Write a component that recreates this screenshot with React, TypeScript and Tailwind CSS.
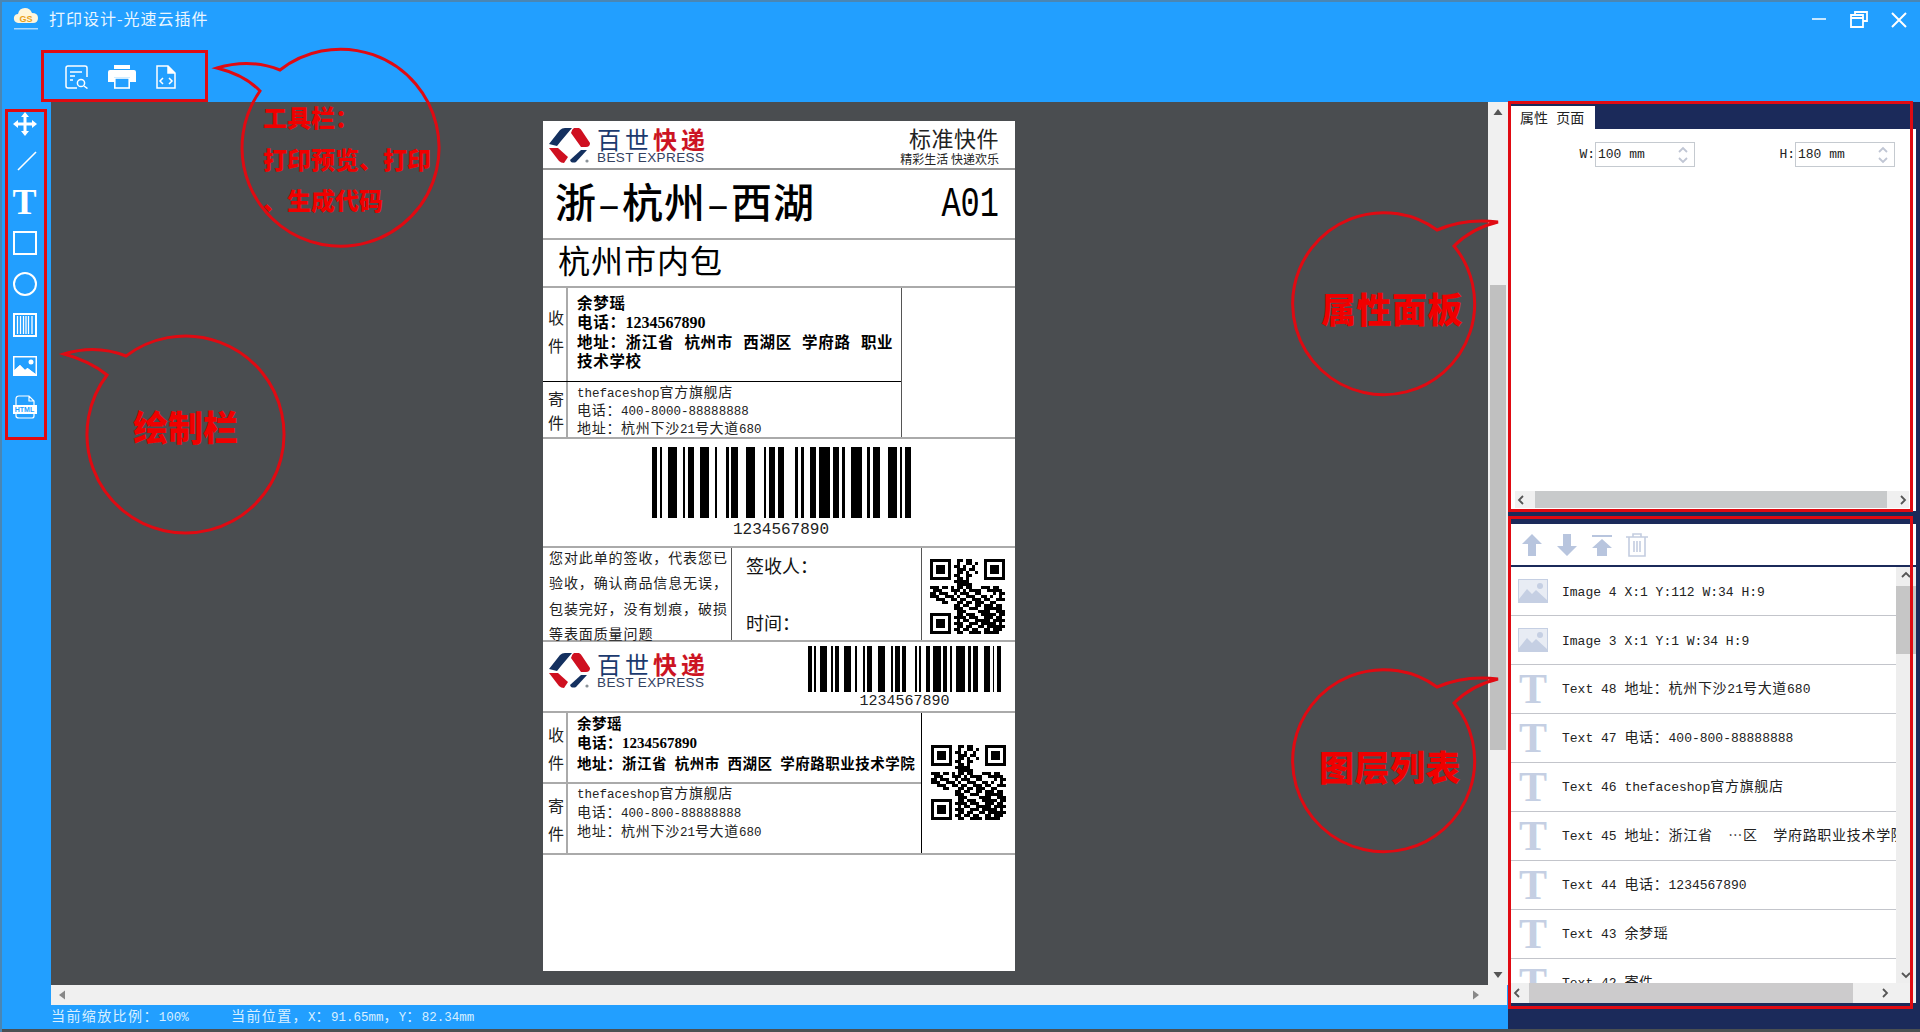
import React from 'react'

const mono = "font-['Liberation_Mono','Noto_Sans_CJK_SC',monospace]"
const cjk = "font-['Noto_Sans_CJK_SC','Liberation_Sans',sans-serif]"

// bars read off the big barcode, in 3x zoom units
const bars = [
  [366, 382], [390, 397], [415, 441], [459, 466], [474, 492], [511, 537], [555, 562], [588, 596], [604, 623],
  [649, 675], [701, 708], [716, 734], [743, 762], [795, 804], [812, 822], [840, 858], [867, 900], [908, 926],
  [936, 943], [961, 996], [1011, 1020], [1029, 1048], [1073, 1099], [1108, 1115], [1124, 1141],
]

const qr = [
  '1111111001101100001111111',
  '1000001001001101001000001',
  '1011101011010010001011101',
  '1011101001110110001011101',
  '1011101001101001001011101',
  '1000001011001100001000001',
  '1111111001101000001111111',
  '0000000011111000000000000',
  '0000000001111100000000000',
  '1110110101101100011101100',
  '0111000111010111100111110',
  '1101110010111001100001011',
  '1110011101001110011010010',
  '0011100110110011101100111',
  '0000110001101101110011000',
  '0000000011011001101110110',
  '0000000011100111001111110',
  '0000000001110000111100111',
  '1111111001101110011111011',
  '1000001011110111001110110',
  '1011101001011001111101111',
  '1011101011100111011111010',
  '1011101001101100110111111',
  '1000001011011011001101110',
  '1111111001100111101111100',
]

const layers = [
  { kind: 'image', label: 'Image 4 X:1 Y:112 W:34 H:9' },
  { kind: 'image', label: 'Image 3 X:1 Y:1 W:34 H:9' },
  { kind: 'text', label: 'Text 48 地址\uff1a杭州下沙21号大道680' },
  { kind: 'text', label: 'Text 47 电话\uff1a400-800-88888888' },
  { kind: 'text', label: 'Text 46 thefaceshop官方旗舰店' },
  { kind: 'text', label: 'Text 45 地址\uff1a浙江省\u00a0 ⋯区\u00a0 学府路职业技术学院' },
  { kind: 'text', label: 'Text 44 电话\uff1a1234567890' },
  { kind: 'text', label: 'Text 43 余梦瑶' },
  { kind: 'text', label: 'Text 42 寄件' },
]

function Mixed({ text, wide = 'text-[14px] tracking-[0.7px]' }: { text: string; wide?: string }) {
  return (
    <>
      {text.split(/([\u3000-\u303f\u4e00-\u9fff\uff00-\uffef⋯]+)/).map((part, i) =>
        i % 2 ? <span key={i} className={wide}>{part}</span> : part
      )}
    </>
  )
}

function Barcode({ className }: { className: string }) {
  return (
    <svg viewBox="366 0 776 10" preserveAspectRatio="none" shapeRendering="crispEdges" className={className}>
      {bars.map(([a, b]) => <rect key={a} x={a} y={0} width={b - a} height={10} fill="#000" />)}
    </svg>
  )
}

function Qr() {
  return (
    <svg viewBox="0 0 25 25" shapeRendering="crispEdges" className="w-[75px] h-[75px]">
      {qr.map((row, y) => row.split('').map((c, x) => c === '1' ? <rect key={x + '-' + y} x={x} y={y} width={1} height={1} fill="#000" /> : null))}
    </svg>
  )
}

function BestLogo({ className }: { className: string }) {
  return (
    <div className={'flex items-start gap-[6px] ' + className}>
      <svg viewBox="0 0 42 36" className="w-[42px] h-[36px] shrink-0">
        <path d="M0 16 L11 2 Q13 0 16 0 L23 0 L12 13 L8 18 Z" fill="#14305f" />
        <path d="M25 0 L30 0 Q32 1 33 3 L41 15 Q41 19 37 19 L32 19 L22 5 Q23 1 25 0 Z" fill="#cf1020" />
        <path d="M0 20 L9 20 L19 29 L15 35 Q12 35 10 33 Z" fill="#cf1020" />
        <path d="M32 22 L38 22 L27 34 Q25 35 22 34 L21 32 Z" fill="#14305f" />
        <circle cx="38" cy="33" r="1.6" fill="#8a9298" />
      </svg>
      <div className="flex flex-col -mt-[1px]">
        <div className={"text-[24px] leading-[23px] tracking-[4px] whitespace-nowrap " + cjk}>
          <span className="text-[#1c3a6e]">百世</span><span className="text-[#cc1423] font-bold">快递</span>
        </div>
        <div className="font-['Liberation_Sans',sans-serif] mt-[1px] text-[13.5px] leading-[14px] tracking-[0.4px] text-[#33415f] whitespace-nowrap">BEST EXPRESS</div>
      </div>
    </div>
  )
}

function ImageIcon({ color, back }: { color: string; back: string }) {
  return (
    <svg viewBox="0 0 30 24" className="w-[30px] h-[24px] shrink-0">
      <rect x="0.5" y="0.5" width="29" height="23" fill={back} stroke={color} />
      <path d="M1 23 L1 20 L9 10 L14 15 L18 11 L29 21 L29 23 Z" fill={color} />
      <circle cx="22" cy="7" r="3" fill={color} />
    </svg>
  )
}

function Chevron({ dir, className }: { dir: 'up' | 'down' | 'left' | 'right'; className: string }) {
  const d = { up: 'M2 8 L6 4 L10 8', down: 'M2 4 L6 8 L10 4', left: 'M8 2 L4 6 L8 10', right: 'M4 2 L8 6 L4 10' }[dir]
  return (
    <svg viewBox="0 0 12 12" className={'w-[12px] h-[12px] ' + className}>
      <path d={d} fill="none" stroke="currentColor" strokeWidth="1.8" />
    </svg>
  )
}

function Spinner({ label, value }: { label: string; value: string }) {
  return (
    <div className={"flex items-center text-[13px] text-[#222] " + mono}>
      <span className="w-[18px] text-right">{label}</span>
      <div className="w-[100px] h-[25px] border border-[#c5cad0] flex items-center justify-between pl-[2px] pr-[5px]">
        <span>{value}</span>
        <div className="flex flex-col text-[#c0c6d4]">
          <Chevron dir="up" className="-mb-[2px]" />
          <Chevron dir="down" />
        </div>
      </div>
    </div>
  )
}

function Side({ a, b, gap }: { a: string; b: string; gap: string }) {
  return (
    <div className={"w-[25px] shrink-0 border-r-2 border-[#aaa] pl-[3px] flex flex-col items-center justify-center text-[16px] text-[#222] " + cjk}>
      <span className={gap}>{a}</span>
      <span>{b}</span>
    </div>
  )
}

function Paper() {
  return (
    <div className="w-[472px] h-[850px] bg-white flex flex-col text-black">
      <div className="h-[49px] shrink-0 border-b-2 border-[#999] flex justify-between pr-[16px] pt-[7px]">
        <BestLogo className="pl-[6px]" />
        <div className={"flex flex-col items-end -mt-[5px] " + cjk}>
          <span className="text-[22px] leading-[29px] tracking-[0.5px] text-[#222]">标准快件</span>
          <span className="text-[12px] leading-[14px] text-[#222] whitespace-nowrap">精彩生活 快递欢乐</span>
        </div>
      </div>
      <div className="h-[70px] shrink-0 border-b-2 border-[#aaa] flex items-center justify-between pl-[12px] pr-[16px]">
        <span className={"text-[41px] font-medium tracking-[1px] leading-none whitespace-nowrap " + cjk}>
          浙<span className="font-['Liberation_Mono',monospace] text-[40px]">–</span>杭州<span className="font-['Liberation_Mono',monospace] text-[40px]">–</span>西湖
        </span>
        <span className="font-['Liberation_Mono',monospace] text-[32px] scale-y-[1.3] leading-none mt-[4px]">A01</span>
      </div>
      <div className="h-[48px] shrink-0 border-b-2 border-[#aaa] flex items-center pl-[15px] pb-[9px]">
        <span className={"text-[32px] tracking-[1px] leading-none whitespace-nowrap " + cjk}>杭州市内包</span>
      </div>
      <div className="h-[151px] shrink-0 border-b-2 border-[#aaa] flex">
        <div className="w-[359px] border-r border-[#555] flex flex-col">
          <div className="h-[94px] shrink-0 border-b border-black flex">
            <Side a="收" b="件" gap="mb-[4px] -mt-[8px]" />
            <div className={"pl-[9px] pt-[5px] text-[15.5px] leading-[19px] font-bold tracking-[0.7px] [word-spacing:6px] whitespace-nowrap " + cjk}>
              <div>余梦瑶</div>
              <div>{'电话\uff1a'}<span className="font-['Liberation_Serif',serif] text-[16px] tracking-[0px]">1234567890</span></div>
              <div>{'地址\uff1a浙江省 杭州市 西湖区 学府路 职业'}</div>
              <div>技术学校</div>
            </div>
          </div>
          <div className="flex-1 min-h-0 flex">
            <Side a="寄" b="件" gap="" />
            <div className={"pl-[9px] pt-[2px] text-[12.5px] leading-[18px] text-[#222] whitespace-nowrap " + mono}>
              <div className="h-[18px]"><Mixed text="thefaceshop官方旗舰店" /></div>
              <div className="h-[18px]"><Mixed text={'电话\uff1a400-8000-88888888'} /></div>
              <div className="h-[18px]"><Mixed text={'地址\uff1a杭州下沙21号大道680'} /></div>
            </div>
          </div>
        </div>
      </div>
      <div className="h-[109px] shrink-0 border-b-2 border-[#aaa] flex flex-col items-center pt-[8px] pl-[4px]">
        <Barcode className="w-[259px] h-[71px] shrink-0" />
        <span className="font-['Liberation_Mono',monospace] text-[16px] leading-[20px] mt-[2px] text-[#222]">1234567890</span>
      </div>
      <div className="h-[94px] shrink-0 border-b-2 border-[#aaa] flex">
        <div className={"w-[189px] shrink-0 border-r border-[#555] pl-[6px] text-[14px] leading-[25.3px] tracking-[0.9px] text-[#222] whitespace-nowrap " + cjk}>
          <div className="-mt-[3px]">{'您对此单的签收\uff0c代表您已'}</div>
          <div>{'验收\uff0c确认商品信息无误\uff0c'}</div>
          <div>{'包装完好\uff0c没有划痕\uff0c破损'}</div>
          <div>等表面质量问题</div>
        </div>
        <div className={"w-[190px] shrink-0 border-r border-[#555] pl-[14px] pt-[4px] text-[18px] leading-[26px] text-[#111] " + cjk}>
          <div>{'签收人\uff1a'}</div>
          <div className="mt-[31px]">{'时间\uff1a'}</div>
        </div>
        <div className="flex-1 pl-[8px] pt-[11px]"><Qr /></div>
      </div>
      <div className="h-[71px] shrink-0 border-b-2 border-[#aaa] flex justify-between pl-[6px] pr-[14px]">
        <BestLogo className="pt-[11px]" />
        <div className="flex flex-col items-center pt-[4px]">
          <Barcode className="w-[193px] h-[46px] shrink-0" />
          <span className="font-['Liberation_Mono',monospace] text-[15px] leading-[18px] mt-[1px] text-[#222]">1234567890</span>
        </div>
      </div>
      <div className="h-[142px] shrink-0 border-b-2 border-[#aaa] flex">
        <div className="w-[379px] border-r border-black flex flex-col">
          <div className="h-[71px] shrink-0 border-b-2 border-[#aaa] flex">
            <Side a="收" b="件" gap="mb-[4px]" />
            <div className={"pl-[9px] text-[14.5px] leading-[19px] font-bold tracking-[0.5px] [word-spacing:4px] whitespace-nowrap " + cjk}>
              <div>余梦瑶</div>
              <div>{'电话\uff1a'}<span className="font-['Liberation_Serif',serif] text-[15px] tracking-[0px]">1234567890</span></div>
              <div>{'地址\uff1a浙江省 杭州市 西湖区 学府路职业技术学院'}</div>
            </div>
          </div>
          <div className="flex-1 min-h-0 flex">
            <Side a="寄" b="件" gap="mb-[4px]" />
            <div className={"pl-[9px] pt-[1px] text-[12.5px] leading-[19px] text-[#222] whitespace-nowrap " + mono}>
              <div className="h-[19px]"><Mixed text="thefaceshop官方旗舰店" /></div>
              <div className="h-[19px]"><Mixed text={'电话\uff1a400-800-88888888'} /></div>
              <div className="h-[19px]"><Mixed text={'地址\uff1a杭州下沙21号大道680'} /></div>
            </div>
          </div>
        </div>
        <div className="flex-1 pl-[9px] pt-[32px]"><Qr /></div>
      </div>
    </div>
  )
}

function RightPanel() {
  return (
    <div className="w-[412px] h-full bg-[#1b2a5a] flex flex-col pr-[4px]">
      <div className="h-[27px] pt-[4px] pl-[3px] flex">
        <div className={"w-[84px] h-[23px] bg-white pl-[9px] text-[14px] leading-[23px] [word-spacing:5px] text-[#222] " + cjk}>属性 页面</div>
      </div>
      <div className="h-[382px] bg-white flex flex-col justify-between pb-[3px]">
        <div className="flex pt-[13px] pl-[69px] gap-[82px]">
          <Spinner label="W:" value="100 mm" />
          <Spinner label="H:" value="180 mm" />
        </div>
        <div className="h-[17px] mx-[7px] bg-[#f0f0f0] flex items-center justify-between text-[#555]">
          <Chevron dir="left" className="" />
          <div className="h-full flex-1 ml-[8px] mr-[10px] bg-[#c8cacb]" />
          <Chevron dir="right" className="" />
        </div>
      </div>
      <div className="h-[13px]" />
      <div className="h-[43px] bg-white border-b-2 border-[#1b2a5a] flex items-center gap-[13px] pl-[13px]">
        <svg viewBox="0 0 22 22" className="w-[22px] h-[22px]"><path d="M11 0 L21 10 L15 10 L15 22 L7 22 L7 10 L1 10 Z" fill="#b8c5de" /></svg>
        <svg viewBox="0 0 22 22" className="w-[22px] h-[22px]"><path d="M7 0 L15 0 L15 12 L21 12 L11 22 L1 12 L7 12 Z" fill="#b8c5de" /></svg>
        <svg viewBox="0 0 22 22" className="w-[22px] h-[22px]"><path d="M1 1 H21 V3 H1 Z M11 5 L21 14 L16 14 L16 22 L6 22 L6 14 L1 14 Z" fill="#b8c5de" /></svg>
        <svg viewBox="0 0 22 24" className="w-[22px] h-[24px]" fill="none" stroke="#c4cde0" strokeWidth="1.6"><path d="M0 4 H22 M7 4 V1 H15 V4 M3 4 V23 H19 V4 M8 8 V19 M11 8 V19 M14 8 V19" /></svg>
      </div>
      <div className="h-[416px] bg-white flex overflow-hidden">
        <div className="flex-1 min-w-0 flex flex-col">
          {layers.map((layer) => (
            <div key={layer.label} className="h-[49px] shrink-0 border-b border-[#c3c5cb] flex items-center pl-[10px] gap-[14px] overflow-hidden">
              {layer.kind === 'image'
                ? <ImageIcon color="#c5cfe3" back="#e8ecf4" />
                : <span className="w-[30px] text-center font-['Liberation_Serif',serif] font-bold text-[42px] leading-none text-[#c5cfe3] shrink-0">T</span>}
              <span className={"text-[13px] text-[#222] whitespace-nowrap " + mono + (layer.kind === 'image' ? ' pt-[3px]' : '')}><Mixed text={layer.label} /></span>
            </div>
          ))}
        </div>
        <div className="w-[20px] shrink-0 bg-[#eeeeee] flex flex-col items-center text-[#555]">
          <Chevron dir="up" className="mt-[2px] mb-[5px]" />
          <div className="w-full h-[68px] bg-[#c6c6c6]" />
          <Chevron dir="down" className="mt-auto mb-[2px]" />
        </div>
      </div>
      <div className="h-[20px] bg-[#f0f0f0] flex items-center pl-[3px] text-[#555]">
        <Chevron dir="left" className="" />
        <div className="h-full w-[324px] ml-[6px] bg-[#cccbcc]" />
        <Chevron dir="right" className="ml-[26px]" />
      </div>
    </div>
  )
}

function Annotations() {
  const red = '#e00a12'
  return (
    <>
      <div className="absolute left-[41px] top-[50px] w-[167px] h-[52px] border-[3px] border-[#e00a12]" />
      <div className="absolute left-[5px] top-[109px] w-[42px] h-[331px] border-[3px] border-[#e00a12]" />
      <div className="absolute left-[1508px] top-[101px] w-[405px] h-[411px] border-[3px] border-[#e00a12]" />
      <div className="absolute left-[1508px] top-[516px] w-[405px] h-[493px] border-[3px] border-[#e00a12]" />
      <svg className="absolute left-0 top-0 w-[1920px] h-[1032px] pointer-events-none" viewBox="0 0 1920 1032" fill="none" stroke={red} strokeWidth="3">
        <path d="M280 70 Q250 58 217 68 Q245 75 260 91 A98.5 98.5 0 1 0 280 70 Z" />
        <path d="M126 356 Q96 344 64 354 Q90 361 107 375 A98.5 98.5 0 1 0 126 356 Z" />
        <path d="M1437 230 Q1465 218 1498 222 Q1472 228 1454 246 A91 91 0 1 1 1437 230 Z" />
        <path d="M1437 687 Q1465 675 1498 679 Q1472 685 1454 703 A91 91 0 1 1 1437 687 Z" />
      </svg>
      <div className={"absolute left-[263px] top-[96px] text-[24px] leading-[41.5px] font-black text-[#f00000] whitespace-nowrap " + cjk}>
        <div>{'工具栏\uff1a'}</div>
        <div>打印预览、打印</div>
        <div>、生成代码</div>
      </div>
      <div className={"absolute left-[133px] top-[400px] text-[35px] leading-[52px] font-black text-[#f00000] " + cjk}>绘制栏</div>
      <div className={"absolute left-[1321px] top-[282px] text-[35px] leading-[52px] font-black tracking-[0.5px] text-[#f00000] " + cjk}>属性面板</div>
      <div className={"absolute left-[1319px] top-[740px] text-[35px] leading-[52px] font-black tracking-[0.5px] text-[#f00000] " + cjk}>图层列表</div>
    </>
  )
}

export default function App() {
  return (
    <div className="relative w-[1920px] h-[1032px] overflow-hidden bg-[#229fff] flex flex-col">
      {/* title bar */}
      <div className="h-[50px] flex items-start pt-[6px] pl-[13px] text-white shrink-0">
        <svg viewBox="0 0 26 24" className="w-[26px] h-[24px]">
          <path d="M5 17 Q0 16 1 11 Q2 8 5 8 Q6 2 12 2 Q17 2 19 7 Q25 7 25 12 Q25 17 20 17 Z" fill="#fff6dc" />
          <text x="13" y="16" textAnchor="middle" fontSize="9" fontWeight="700" fill="#e8a11c" fontFamily="Liberation Sans">GS</text>
          <rect x="1" y="22" width="24" height="1.5" fill="#a8d8ff" />
        </svg>
        <span className={"ml-[10px] text-[16px] leading-[24px] tracking-[1px] text-[#eaf6ff] " + cjk}>打印设计-光速云插件</span>
        <div className="ml-auto flex items-center pr-[12px] pt-[5px] gap-[22px]">
          <svg viewBox="0 0 18 18" className="w-[18px] h-[18px]"><path d="M2 8 H16" stroke="#fff" strokeWidth="1.5" /></svg>
          <svg viewBox="0 0 18 18" className="w-[18px] h-[18px]" fill="none" stroke="#fff" strokeWidth="1.8"><path d="M5 4 V1 H17 V10 H13" /><path d="M5 4 H1 V16 H13 V7 H1" /><path d="M5 4 H13 V7" /></svg>
          <svg viewBox="0 0 18 18" className="w-[18px] h-[18px]"><path d="M2 2 L16 16 M16 2 L2 16" stroke="#fff" strokeWidth="2" /></svg>
        </div>
      </div>
      {/* toolbar */}
      <div className="h-[52px] shrink-0 flex items-center pl-[65px] gap-[19px] pt-[2px]">
        <svg viewBox="0 0 24 24" className="w-[24px] h-[24px]" fill="none" stroke="#fff" strokeWidth="1.5">
          <path d="M12 23 H3 Q1 23 1 21 V3 Q1 1 3 1 H20 Q22 1 22 3 V12" />
          <path d="M5 7 H17 M5 11 H10 M5 15 H8" />
          <circle cx="16" cy="18" r="3.6" />
          <path d="M19 21 L22.5 23.5" />
        </svg>
        <svg viewBox="0 0 28 24" className="w-[28px] h-[24px]">
          <path d="M6 0 H22 V4 H6 Z" fill="#fff" />
          <path d="M2 5 H26 Q28 5 28 7 V17 H22 V12 H6 V17 H0 V7 Q0 5 2 5 Z" fill="#fff" />
          <rect x="6.8" y="13" width="14.4" height="10" fill="none" stroke="#fff" strokeWidth="1.6" />
        </svg>
        <svg viewBox="0 0 22 24" className="w-[22px] h-[24px]" fill="none" stroke="#fff" strokeWidth="1.5">
          <path d="M13 1 H2 V23 H20 V8 Z" />
          <path d="M13 1 V8 H20" fill="#fff" />
          <path d="M8 13 L5 16 L8 19 M14 13 L17 16 L14 19" />
        </svg>
      </div>
      <div className="flex-1 min-h-0 flex">
        {/* draw bar */}
        <div className="w-[51px] shrink-0 flex flex-col items-center pt-[6px] pr-[2px]">
          <div className="w-[41px] h-[32px] flex items-center justify-center">
            <svg viewBox="0 0 24 24" className="w-[24px] h-[24px]"><path d="M12 0 L16 5 H13.5 V10.5 H19 V8 L24 12 L19 16 V13.5 H13.5 V19 H16 L12 24 L8 19 H10.5 V13.5 H5 V16 L0 12 L5 8 V10.5 H10.5 V5 H8 Z" fill="#fff" /></svg>
          </div>
          {[
            <svg viewBox="0 0 24 24" className="w-[24px] h-[24px]"><path d="M5 21 L23 3" stroke="#fff" strokeWidth="1.6" /></svg>,
            <span className="font-['Liberation_Serif',serif] font-bold text-[36px] leading-none text-white">T</span>,
            <div className="w-[24px] h-[24px] border-2 border-white" />,
            <div className="w-[24px] h-[24px] border-2 border-white rounded-full" />,
            <svg viewBox="0 0 24 24" className="w-[24px] h-[24px]" fill="none" stroke="#fff"><rect x="1" y="1" width="22" height="22" strokeWidth="2" /><path d="M4.5 3 V21 M7.5 3 V21 M10.5 3 V21 M13 3 V21 M15.5 3 V21 M19 3 V21" strokeWidth="1.3" /></svg>,
            <svg viewBox="0 0 24 20" className="w-[24px] h-[20px]"><path d="M0 0 H24 V20 H0 Z M1.5 1.5 V14 L7 9 L12 14 L14.5 12 L22.5 18 V1.5 Z" fill="#fff" fillRule="evenodd" /><circle cx="18" cy="6" r="2.5" fill="#fff" /><path d="M1.5 14 L7 9 L12 14 L14.5 12 L22.5 18 V18.5 H1.5 Z" fill="#fff" /></svg>,
            <div className="relative w-[24px] h-[24px]">
              <svg viewBox="0 0 24 24" className="w-[24px] h-[24px]" fill="none" stroke="#fff" strokeWidth="1.2"><path d="M3 10 V4 Q3 1 6 1 H16 L21 6 V10 M16 1 V6 H21" /><path d="M3 19 V21 Q3 23 6 23 H19 Q21 23 21 21 V19" /></svg>
              <span className="absolute left-0 top-[10px] w-[24px] h-[9px] bg-white text-[#229fff] text-[7px] leading-[9px] font-bold text-center font-['Liberation_Sans',sans-serif]">HTML</span>
            </div>,
          ].map((icon, i) => (
            <div key={i} className="w-[41px] h-[41px] flex items-center justify-center">{icon}</div>
          ))}
        </div>
        {/* centre */}
        <div className="flex-1 min-w-0 flex flex-col">
          <div className="flex-1 min-h-0 flex">
            <div className="flex-1 bg-[#4a4d50] pl-[492px] pt-[19px]"><Paper /></div>
            <div className="w-[20px] shrink-0 bg-[#f0f0f0] flex flex-col items-center text-[#555]">
              <svg viewBox="0 0 12 8" className="w-[10px] h-[6px] mt-[7px]"><path d="M6 0 L12 8 H0 Z" fill="#555" /></svg>
              <div className="w-[16px] h-[465px] mt-[170px] bg-[#c0c0c0]" />
              <svg viewBox="0 0 12 8" className="w-[10px] h-[6px] mt-auto mb-[7px]"><path d="M6 8 L12 0 H0 Z" fill="#555" /></svg>
            </div>
          </div>
          <div className="h-[20px] shrink-0 bg-[#f0f0f0] flex items-center justify-between pl-[8px] pr-[28px] mr-[1px]">
            <svg viewBox="0 0 8 12" className="w-[6px] h-[10px]"><path d="M0 6 L8 0 V12 Z" fill="#888" /></svg>
            <svg viewBox="0 0 8 12" className="w-[6px] h-[10px]"><path d="M8 6 L0 0 V12 Z" fill="#888" /></svg>
          </div>
          <div className={"h-[24px] shrink-0 flex items-center text-[12.5px] text-[#d8efff] whitespace-nowrap " + mono}>
            <span className="w-[180px]"><Mixed text={'当前缩放比例\uff1a100%'} wide="text-[14px] tracking-[1.4px]" /></span>
            <span><Mixed text={'当前位置\uff0cX\uff1a91.65mm\uff0cY\uff1a82.34mm'} wide="text-[14px] tracking-[1.4px]" /></span>
          </div>
        </div>
        <RightPanel />
      </div>
      <div className="h-[3px] shrink-0 bg-[#4b4f52]" />
      <div className="absolute inset-0 border-t-2 border-l-2 border-[#4a86b4] pointer-events-none" />
      <Annotations />
    </div>
  )
}
